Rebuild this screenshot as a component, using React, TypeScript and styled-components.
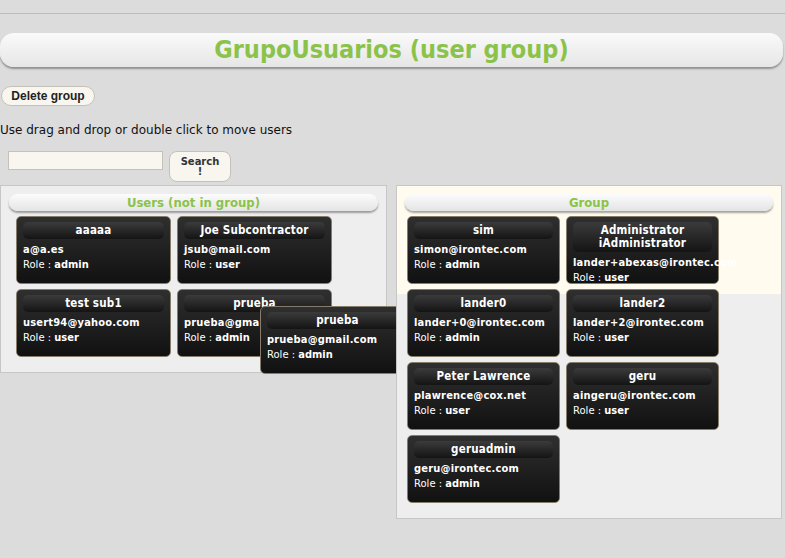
import React from "react";
import styled, { createGlobalStyle } from "styled-components";

const Global = createGlobalStyle`
  html, body { margin: 0; padding: 0; background: #dcdcdc; }
  body { font-family: "DejaVu Sans", Verdana, sans-serif; width: 785px; height: 558px; overflow: hidden; }
`;

const Page = styled.div`
  display: flex;
  flex-direction: column;
`;

const TopRule = styled.div`
  height: 13px;
  border-bottom: 1px solid #bdbdbd;
`;

const TitleBar = styled.h1`
  margin: 19px 2px 0 0;
  height: 34px;
  border-radius: 14px;
  background: linear-gradient(#fafafa, #e6e6e6);
  box-shadow: 0 2px 2px rgba(0,0,0,0.35);
  color: #8bc34a;
  font-family: "DejaVu Sans Condensed", "DejaVu Sans", sans-serif;
  font-weight: bold;
  font-size: 25px;
  line-height: 34px;
  text-align: center;
`;

const PillButton = styled.button`
  background: #f8f6ee;
  border: 1px solid #c4c2b8;
  color: #222;
  font-family: "Liberation Sans Narrow", "Liberation Sans", Arial, sans-serif;
  font-weight: bold;
  font-size: 11px;
  cursor: pointer;
  padding: 0;
`;

const DeleteButton = styled(PillButton)`
  margin: 19px 0 0 1px;
  width: 94px;
  height: 20px;
  border-radius: 10px;
  align-self: flex-start;
  font-size: 12px;
`;

const Hint = styled.p`
  margin: 17px 0 0 0;
  font-size: 12px;
  color: #111;
  line-height: 15px;
`;

const SearchRow = styled.div`
  display: flex;
  gap: 6px;
  margin: 13px 0 0 8px;
  align-items: flex-start;
`;

const SearchInput = styled.input`
  width: 153px;
  height: 17px;
  padding: 0;
  border: 1px solid #c4c2b8;
  background: #f8f6ee;
  margin-top: 0;
`;

const SearchButton = styled(PillButton)`
  width: 62px;
  height: 31px;
  border-radius: 8px;
  font-family: "DejaVu Sans", sans-serif;
  font-size: 10px;
  line-height: 10px;
  color: #333;
  padding-top: 1px;
`;

const Panels = styled.div`
  display: flex;
  gap: 9px;
  margin-top: 3px;
  align-items: flex-start;
`;

const Panel = styled.section<{ $w: number; $h: number; $cream?: boolean }>`
  position: relative;
  z-index: ${(p) => (p.$cream ? 2 : 1)};
  width: ${(p) => p.$w}px;
  height: ${(p) => p.$h}px;
  box-sizing: border-box;
  border: 1px solid #c6c6c6;
  background: ${(p) =>
    p.$cream ? "linear-gradient(#fffbee 0 108px, #eeeeee 108px)" : "#eeeeee"};
  padding: 8px 0 0 0;
`;

const PanelHeader = styled.h2`
  margin: 0 8px 0 8px;
  height: 17px;
  border-radius: 9px;
  background: linear-gradient(#fcfcfc, #e4e4e4);
  box-shadow: 0 2px 2px rgba(0,0,0,0.35);
  color: #8bc34a;
  font-family: "DejaVu Sans Condensed", "DejaVu Sans", sans-serif;
  font-weight: bold;
  font-size: 13px;
  line-height: 17px;
  text-align: center;
`;

const CardGrid = styled.div<{ $left: number; $w: number }>`
  display: grid;
  grid-template-columns: repeat(2, ${(p) => p.$w}px);
  grid-auto-rows: 68px;
  column-gap: 6px;
  row-gap: 5px;
  margin: 5px 0 0 ${(p) => p.$left}px;
`;

const Card = styled.div<{ $w?: number }>`
  box-sizing: border-box;
  ${(p) => (p.$w ? `width: ${p.$w}px;` : "")}
  height: 68px;
  border: 1px solid #857c6b;
  border-radius: 5px;
  background: linear-gradient(#2f2f2f, #111111);
  padding: 5px 0 0 6px;
  color: #fff;
  font-family: "DejaVu Sans Condensed", "DejaVu Sans", sans-serif;
  font-size: 11px;
  white-space: nowrap;
`;

const Dragged = styled(Card)`
  position: absolute;
  left: 259px;
  top: 120px;
  z-index: 3;
`;

const NameBar = styled.div`
  margin-right: 6px;
  min-height: 17px;
  border-radius: 5px;
  background: linear-gradient(#3b3b3b, #141414);
  font-weight: bold;
  font-size: 11.5px;
  line-height: 13px;
  letter-spacing: 0.2px;
  padding: 2px 0;
  box-sizing: border-box;
  text-align: center;
  white-space: normal;
`;

const Email = styled.div`
  margin-top: 3px;
  font-weight: bold;
  line-height: 15px;
  letter-spacing: 0.2px;
`;

const Role = styled.div`
  line-height: 15px;
  font-family: "DejaVu Sans", sans-serif;
  font-size: 10px;
  b { font-family: "DejaVu Sans Condensed", sans-serif; font-size: 11px; }
`;

type U = { name: string; email: string; role: string };

const outUsers: U[] = [
  { name: "aaaaa", email: "a@a.es", role: "admin" },
  { name: "Joe Subcontractor", email: "jsub@mail.com", role: "user" },
  { name: "test sub1", email: "usert94@yahoo.com", role: "user" },
  { name: "prueba", email: "prueba@gmail.com", role: "admin" },
];

const groupUsers: U[] = [
  { name: "sim", email: "simon@irontec.com", role: "admin" },
  { name: "Administrator iAdministrator", email: "lander+abexas@irontec.com", role: "user" },
  { name: "lander0", email: "lander+0@irontec.com", role: "admin" },
  { name: "lander2", email: "lander+2@irontec.com", role: "user" },
  { name: "Peter Lawrence", email: "plawrence@cox.net", role: "user" },
  { name: "geru", email: "aingeru@irontec.com", role: "user" },
  { name: "geruadmin", email: "geru@irontec.com", role: "admin" },
];

function UserCard({ u }: { u: U }) {
  return (
    <Card>
      <NameBar>{u.name}</NameBar>
      <Email>{u.email}</Email>
      <Role>
        Role : <b>{u.role}</b>
      </Role>
    </Card>
  );
}

export default function App() {
  return (
    <Page>
      <Global />
      <TopRule />
      <TitleBar>GrupoUsuarios (user group)</TitleBar>
      <DeleteButton>Delete group</DeleteButton>
      <Hint>Use drag and drop or double click to move users</Hint>
      <SearchRow>
        <SearchInput />
        <SearchButton>
          Search
          <br />!
        </SearchButton>
      </SearchRow>
      <Panels>
        <Panel $w={387} $h={188}>
          <PanelHeader>Users (not in group)</PanelHeader>
          <CardGrid $left={15} $w={155}>
            {outUsers.map((u) => (
              <UserCard key={u.email} u={u} />
            ))}
          </CardGrid>
          <Dragged $w={155}>
            <NameBar>prueba</NameBar>
            <Email>prueba@gmail.com</Email>
            <Role>
              Role : <b>admin</b>
            </Role>
          </Dragged>
        </Panel>
        <Panel $w={386} $h={334} $cream>
          <PanelHeader>Group</PanelHeader>
          <CardGrid $left={10} $w={153}>
            {groupUsers.map((u) => (
              <UserCard key={u.email} u={u} />
            ))}
          </CardGrid>
        </Panel>
      </Panels>
    </Page>
  );
}
